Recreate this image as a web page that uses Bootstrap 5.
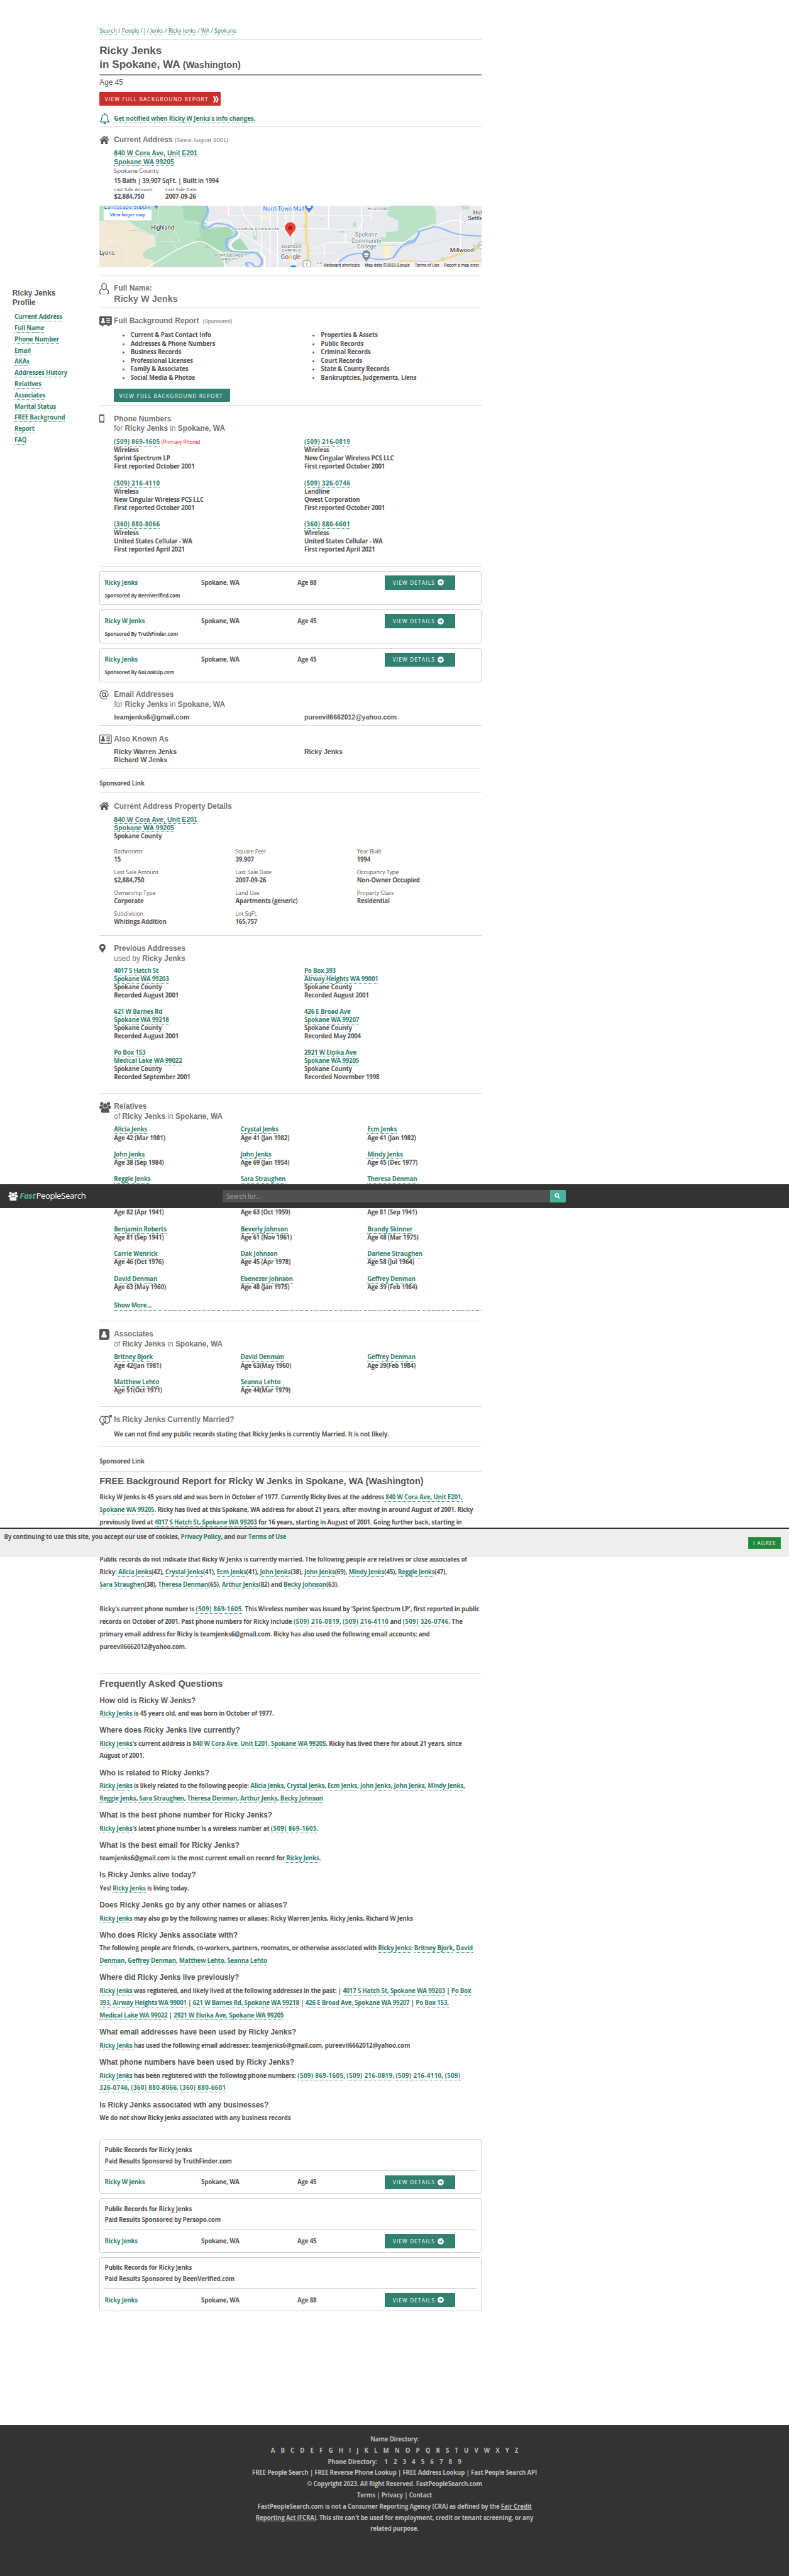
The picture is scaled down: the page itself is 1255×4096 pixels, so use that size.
<!DOCTYPE html>
<html lang="en">
<head>
<meta charset="utf-8">
<meta name="viewport" content="width=device-width, initial-scale=1">
<title>Ricky Jenks in Spokane, WA</title>
<link rel="stylesheet" href="https://cdn.jsdelivr.net/npm/bootstrap@5.3.0/dist/css/bootstrap.min.css">
<script src="https://cdn.jsdelivr.net/npm/bootstrap@5.3.0/dist/js/bootstrap.bundle.min.js"></script>
<style>
html{font-size:6.5935px}
body{font-family:"Open Sans","Noto Sans",sans-serif;font-size:1.47rem;font-weight:700;letter-spacing:-.028rem;color:#555;background:#fff;line-height:2rem}
.page{height:4096px;overflow:hidden}
.page a:not([href]){color:#328170;text-decoration:none;border-bottom:1px dotted #328170}
.page .cardx a:not([href]),.page .cookie a:not([href]){border:0}
.page a.ph:not([href]){letter-spacing:.06rem}
.arial,h1,h2,h3,h4{font-family:"Liberation Sans",Arial,sans-serif;font-weight:700;letter-spacing:0}
.side{width:24rem;padding:69.6rem 0 0 3rem;flex:none}
.side h2{font-size:1.8rem;line-height:2.3rem}
.side ul{padding:.9rem 0 0 .5rem}
.side li{line-height:2.7rem}
.main{width:92.25rem;flex:none}
.sec{border-bottom:1px solid #ddd;padding-top:2.05rem}
.sec h2{font-size:1.8rem;line-height:2.35rem;color:#757575;padding-left:3.5rem;position:relative}
.sec h2 span{font-weight:400}
.sec h2 svg,.bell svg{position:absolute;left:0}
.bd{padding-left:3.5rem}
.crumbs{height:9.6rem;padding-top:6.4rem;line-height:2.4rem;border-bottom:1px solid #ddd;font-weight:400;font-size:1.32rem;letter-spacing:0}
h1{font-size:2.6rem;line-height:3.4rem;height:8.6rem;padding-top:.8rem;border-bottom:2px solid #999}
h1,h2,h3,p,ul{margin:0!important}
h1 span{font-size:2.2rem}
.intro{height:12.4rem;padding-top:.6rem}
.age{font:1.8rem/2.4rem "Liberation Sans",Arial,sans-serif;letter-spacing:0}
.btnx{display:inline-flex;align-items:center;color:#fff;font-weight:400;font-size:1.27rem;letter-spacing:.175rem;border-radius:.2rem;line-height:2rem;white-space:nowrap}
.btn-red{background:#c72f2c;height:3.25rem;padding:.2rem .5rem 0 1.3rem;width:29.3rem;margin-top:1rem;justify-content:space-between}
.btn-green{background:#328170;height:3.25rem;padding:.2rem 0 0 1.3rem;width:28rem}
.btn-det{background:#328170;height:3.4rem;width:17rem;padding-left:2rem;letter-spacing:.17rem}
.bell{position:relative;padding-left:3.5rem;margin-top:1.9rem;line-height:2.6rem;letter-spacing:-.015rem}
.page .addr a:not([href]){font-family:"Liberation Sans",Arial,sans-serif;letter-spacing:0}
.addr a,.arial{font-size:1.6rem}
.addr{line-height:1.96rem}
.lt{font-weight:400;letter-spacing:0}
.tiny{font-size:1.15rem;display:block;line-height:1.75rem}
.facts{height:5.1rem}
.map{height:15rem;margin-top:-.45rem}
.cardx{border:1px solid #ccc;border-radius:.5rem;height:8.2rem;margin-bottom:1.1rem}
.crow{padding:1rem 0 0 1.1rem;height:4.3rem}
.spo{font-size:1.2rem;padding:.5rem 0 0 1.1rem}
.dc{width:1.5rem;height:1.5rem;margin-left:.6rem}
.pubcard{height:13.15rem;margin-bottom:1.05rem;padding:1.15rem 1.1rem 0}
.pt{line-height:2.7rem;height:6.35rem;border-bottom:1px solid #ccc}
.pb{height:5.5rem}
.w1{width:23.3rem}.w2{width:23.2rem}.w3{width:21rem}
.half{width:45.9rem}.rel{width:30.55rem}.third{width:29.3rem}
.cell{height:10rem}
.cell.c2{height:9.83rem;line-height:1.96rem}
.cell.c3{height:6rem}
.cell.cp{height:5rem;line-height:1.8rem}
.cell.cp small{font-size:1.33rem;font-weight:400;letter-spacing:0}
.para{line-height:3rem;white-space:nowrap}
.qa h3{font-size:1.8rem;line-height:2.4rem}
.qa p{line-height:3rem;padding:.4rem 0 1.43rem;white-space:nowrap}
.page .big{font-size:2.2rem;line-height:2.8rem;color:#555;padding:0}
.topbar{position:absolute;left:0;right:0;top:285.6rem;height:5.7rem;background:#333}
.srch{margin-left:32.9rem;width:79rem;height:3.1rem;background:#505050;color:#aaa;font-weight:400;font-size:1.55rem;line-height:3.2rem;padding-left:1rem}
.logo{margin-left:.4rem;color:#fff;font-weight:400;font-size:2rem;line-height:3rem;width:16rem;white-space:nowrap;letter-spacing:-.06rem}
.logo b{color:#47b39c;font-style:italic;font-weight:700;margin-right:.2rem}
.sbtn{background:#47b39c;width:3.8rem;height:3.1rem;border-radius:0 .3rem .3rem 0}
.cookie{position:absolute;left:0;right:0;top:368.4rem;height:7.1rem;background:#eee;border-top:2px solid #333}
.agree{background:#21893a;border:1px solid #28a745;color:#fff;width:7.9rem;height:2.95rem;font-weight:400;font-size:1.25rem;letter-spacing:.15rem;margin:1.9rem 1.9rem 0 0}
.foot{position:absolute;left:0;right:0;top:584.8rem;height:37rem;background:#333;color:#bbb;padding-top:2.15rem;line-height:2.7rem}
.dir{word-spacing:1.05rem}
.hid{height:2rem;padding-top:1rem}
.peek{display:block;height:1rem;border-bottom:1px dotted #328170}
.bul{padding-left:4rem;line-height:2.04rem}
</style>
</head>
<body>
<svg width="0" height="0" class="position-absolute"><symbol id="arr" viewBox="0 0 16 16"><circle cx="8" cy="8" r="8" fill="#fff"/><path d="M4 7h4V4l5 4-5 4V9H4z" fill="#328170"/></symbol></svg>
<div class="page position-relative">
<div class="d-flex">
<aside class="side">
<h2>Ricky Jenks<br>Profile</h2>
<ul class="list-unstyled">
<li><a>Current Address</a></li><li><a>Full Name</a></li><li><a>Phone Number</a></li><li><a>Email</a></li><li><a>AKAs</a></li><li><a>Addresses History</a></li><li><a>Relatives</a></li><li><a>Associates</a></li><li><a>Marital Status</a></li><li><a>FREE Background</a></li><li><a>Report</a></li><li><a>FAQ</a></li>
</ul>
</aside>
<main class="main">
<nav class="crumbs"><a>Search</a> / <a>People</a> / <a>J</a> / <a>Jenks</a> / <a>Ricky Jenks</a> / <a>WA</a> / <a>Spokane</a></nav>
<h1>Ricky Jenks<br>in Spokane, WA <span>(Washington)</span></h1>
<div class="intro sec">
<div class="age">Age 45</div>
<div class="d-flex"><div class="btnx btn-red">VIEW FULL BACKGROUND REPORT <svg class="flex-shrink-0" style="width:1.6rem;height:1.5rem" viewBox="0 0 16 16"><path d="M1 0h3.500l4.500 8-4.500 8H1l4-8zM7.500 0H11l4.500 8-4.500 8H7.500l4-8z" fill="#fff"/></svg></div></div>
<div class="bell"><svg style="width:2.6rem;height:2.7rem" viewBox="0 0 26 27"><path d="M2 21c4-3 4-6 4-11 0-4 3-7 7-7s7 3 7 7c0 5 0 8 4 11zM13 0v3" fill="none" stroke="#328170" stroke-width="2" stroke-linejoin="round"/><path d="M9.500 22h7a3.500 4 0 0 1-7 0z" fill="#328170"/></svg><a>Get notified when Ricky W Jenks's info changes.</a></div>
</div>

<section class="sec" style="height:35.8rem">
<h2 style="height:2.35rem"><svg style="width:2.4rem;height:2rem;top:.1rem" viewBox="0 0 24 20"><path id="hs" d="M12 0l5 4V1h3v5.500l4 3.500-1.300 1.800L12 3 1.300 11.800 0 10zM12 4.800l8 6.600V20h-5.500v-6h-5v6H4v-8.600z" fill="#555"/></svg>Current Address <span style="font-size:1.44rem">(Since August 2001)</span></h2>
<div class="bd addr" style="padding-top:1rem;height:5.02rem"><a>840 W Cora Ave, Unit E201</a><br><a>Spokane WA 99205</a></div>
<div class="bd lt" style="line-height:2.45rem;font-size:1.42rem">Spokane County</div>
<div class="bd" style="line-height:2.4rem">15 Bath | 39,907 SqFt. | Built in 1994</div>
<div class="bd d-flex facts" style="line-height:1.75rem"><div style="width:12.4rem"><span class="lt tiny">Last Sale Amount</span>$2,884,750</div><div><span class="lt tiny">Last Sale Date</span>2007-09-26</div></div>
<svg class="map w-100 d-block" viewBox="0 0 922.500 150" preserveAspectRatio="none" font-family="Roboto" font-weight="400" letter-spacing="0">
<rect width="923" height="150" fill="#e8eaed"/>
<g transform="translate(0,-1) scale(.5885,.3333)" fill="none">
<path d="M0 0H440C470 60 420 130 450 160C500 150 560 170 575 200C540 230 520 270 530 330C570 360 600 330 650 330C670 380 650 410 600 456H0z" fill="#bbe2c6"/>
<path d="M0 110C60 120 100 100 125 120C150 160 190 200 227 214L232 300C190 310 170 350 182 380C200 400 240 380 215 456H0z" fill="#f1e9d6"/>
<path d="M340 0H430C470 60 400 130 430 170C500 190 530 110 545 200C550 230 510 270 530 330C500 340 480 300 430 310C460 250 350 280 420 220C400 170 420 110 400 110L350 105z" fill="#a8dab5"/>
<path d="M578 240L612 320 560 330C530 300 535 270 578 240z" fill="#a8dab5"/>
<path d="M500 456L540 400 640 340 665 380 660 456zM452 0H640V320L580 215 545 130 470 120z" fill="#e8eaed"/>
<path d="M1190 0H1365L1380 40V130L1310 170 1300 210 1270 265H1145L1150 230 1175 235 1174 195 1225 185V110L1180 75z" fill="#bbe2c6"/>
<path d="M1480 3h35v30h-25zM1530 285h15v45h-15zM900 97h15v10h-15zM980 186h28v12h-28zM792 275h40v14h-40zM836 145h12v24h-12zM1040 125h12v32h-12zM1400 375h15v30h-15zM632 170h14v80h-14z" fill="#bbe2c6"/>
<path d="M510 28h18v43h-18z" fill="#fce4e4"/><path d="M658 80h35v26h-35zM847 3h30v72h-30zM1165 275h30v135h-30z" fill="#fbf0d0"/>
<g stroke="#fff" stroke-width="4">
<path d="M530 3V75H1115M665 3V450M700 3V450M730 3V450M795 3V450M765 3V200M1075 3V200M1115 3V110M540 170H900L1060 178 1085 100M580 3C590 120 640 130 640 220M722 410H960M805 300V420M880 310L940 270H1010L1250 270M860 310H900M855 345H970M980 380L960 456M1008 200V270M940 3V170H870M922 270V380M1480 50V360M580 200L770 410"/>
<path d="M430 0C480 60 400 110 450 130C520 90 540 100 550 170C610 210 540 250 538 290C550 350 600 330 645 322C700 380 670 420 680 456M190 456L320 320C360 290 390 250 430 268L500 345 520 456M1565 125H1490C1460 90 1440 110 1380 150C1300 180 1300 220 1240 280C1210 330 1220 390 1190 390H1110" stroke-width="6"/>
<path d="M245 3L235 260M240 260H330L300 150M110 260V456M0 260H110M0 350L60 235M320 320L290 240M350 120L480 150M500 345L600 330M520 456L620 400 645 322" stroke-width="2.500" opacity=".7"/></g>
<path d="M435 3C470 60 400 120 430 170C480 150 450 110 530 145C590 200 560 230 520 245C520 300 520 335 560 335C600 345 640 330 655 365C690 430 640 480 625 420C590 400 600 440 620 456M970 456C980 400 1020 340 1080 350C1100 400 1180 400 1205 380C1220 350 1220 320 1250 280C1290 270 1310 230 1310 190L1375 155C1420 170 1430 200 1490 215L1568 225" stroke="#90b8fb" stroke-width="9"/>
<path d="M1245 310l15-50 45-15-15 30-30 10z" fill="#9cc0fc"/>
<path d="M120 185L160 180 200 210 235 200" stroke="#9cc0fc" stroke-width="2"/>
<path d="M960 360C1080 240 1200 320 1330 280C1450 220 1500 230 1568 240" stroke="#d4d7dc" stroke-width="3"/>
<path d="M848 3V280L856 300V456M1190 456L1240 405 1380 410 1568 300M1290 456L1568 400" stroke="#f5c34e" stroke-width="9"/>
<path d="M848 3V280L856 300V456M1190 456L1240 405 1380 410 1568 300M1290 456L1568 400" stroke="#fde9a9" stroke-width="4"/>
</g>
<g fill="#3c4043" stroke="#fff" stroke-width="2" paint-order="stroke">
<g fill="#1a73e8"><text x="11" y="8" textLength="112" font-size="14">Landscape Supply</text><text x="395" y="12" textLength="99" font-size="14">NorthTown Mall</text></g>
<g font-size="14" fill="#222"><text x="125" y="58" textLength="55">Highland</text><text x="0" y="118" textLength="37">Lyons</text><text x="846" y="113" textLength="57">Millwood</text><text x="902" y="21">Hut</text><text x="889" y="34.500">Settle</text></g>
<g font-size="9.500" fill="#5f6368"><text x="323" y="59" textLength="111">AUDUBON-DOWNRIVER</text><text x="440" y="102" textLength="47">EMERSON</text><text x="440" y="111" textLength="47">GARFIELD</text><text x="279" y="122.500" textLength="68">FORT GEORGE</text><text x="294" y="131.500" textLength="39">WRIGHT</text><text x="293" y="154" textLength="76">WEST SPOKANE</text><text x="526" y="140.500" textLength="34">LOGAN</text><text x="648" y="11" textLength="48">HILLYARD</text></g>
<g font-size="13.500" fill="#607d8b"><text x="617" y="75" textLength="54">Spokane</text><text x="608" y="89" textLength="72">Community</text><text x="622" y="103" textLength="46">College</text></g>
</g>
<path d="M460.500 77C459 66 448 62 448 53a12.700 13.300 0 0 1 25.500 0C473.500 62 462 66 460.500 77z" fill="#ea4335"/><circle cx="460.500" cy="53.500" r="5" fill="#b31412"/>
<path d="M496 0h20c0 8-7 10-10 18-2-8-10-10-10-18zM133 0h9l-4.500 9z" fill="#4285f4"/><path d="M502 0h8v6h-8z" fill="#fff"/>
<path d="M644 137c-2-8-10-11-10-19a10 10.500 0 0 1 20 0c0 8-8 11-10 19z" fill="#78909c"/><path d="M637 117l7-3.500 7 3.500-7 3.500zM640 120v3l4 1.500 4-1.500v-3l-4 2z" fill="#fff"/>
<circle cx="468" cy="152" r="8.500" fill="#12a4b8"/>
<rect x="491.500" y="133" width="18" height="15" rx="4" fill="#fff" stroke="#666"/><text x="497.500" y="144" font-size="9" fill="#333">2</text>
<circle cx="921" cy="96" r="8" fill="#fff" stroke="#666"/><text x="915" y="99" font-size="8" fill="#333">29</text>
<text y="129" font-size="15.500" font-weight="500" stroke="#fff" stroke-width="2" paint-order="stroke"><tspan x="437" fill="#4285f4">G</tspan><tspan x="448" fill="#ea4335">o</tspan><tspan x="457" fill="#fbbc05">o</tspan><tspan x="466" fill="#4285f4">g</tspan><tspan x="474" fill="#34a853">l</tspan><tspan x="477" fill="#ea4335">e</tspan></text>
<rect x="538" y="136" width="385" height="14" fill="#f5f5f5" opacity=".8"/>
<g font-size="10" fill="#111"><text x="541" y="147" textLength="87">Keyboard shortcuts</text><text x="640" y="147" textLength="109">Map data ©2023 Google</text><text x="761" y="147" textLength="59">Terms of Use</text><text x="832" y="147" textLength="84">Report a map error</text></g>
<rect x="10" y="10" width="116" height="27" rx="2" fill="#000" opacity=".15"/><rect x="10" y="10" width="116" height="26" rx="2" fill="#fff"/><text x="25" y="26.500" font-size="12" fill="#1a73e8" font-weight="500" textLength="86">View larger map</text>
</svg>
</section>

<section class="sec" style="height:7.85rem">
<h2><svg style="width:2.3rem;height:2.8rem;top:-.2rem" viewBox="0 0 23 28"><path d="M6 7a5.500 6 0 0 1 11 0v3a5.500 6 0 0 1-11 0zM7 14C2 15 1 19 1 23c0 2 1 4 4 4h13c3 0 4-2 4-4 0-4-1-8-6-9" fill="none" stroke="#555" stroke-width="2"/></svg>Full Name:</h2>
<h2 style="font-size:2.2rem;line-height:2.5rem">Ricky W Jenks</h2>
</section>

<section class="sec" style="height:23.6rem;padding-top:2rem">
<h2><svg style="width:3rem;height:2.3rem;top:.1rem" viewBox="0 0 30 23"><rect width="30" height="21" rx="2" fill="#555"/><path d="M4 16c0-4 1-5 3-5.500C5 7 6 4 9 4s4 3 2 6.500c2 .5 3 1.500 3 5.500zM17 5h9v2h-9zM17 9.500h9v2h-9zM17 14h9v2h-9z" fill="#fff"/><path d="M5 21h5v2H5zM20 21h5v2h-5z" fill="#555"/></svg>Full Background Report <span style="font-size:1.3rem;margin-left:.4rem">(Sponsored)</span></h2>
<div class="row g-0 bd" style="padding-top:1.1rem"><div class="half"><ul class="bul"><li>Current &amp; Past Contact Info</li><li>Addresses &amp; Phone Numbers</li><li>Business Records</li><li>Professional Licenses</li><li>Family &amp; Associates</li><li>Social Media &amp; Photos</li></ul></div><div class="col"><ul class="bul"><li>Properties &amp; Assets</li><li>Public Records</li><li>Criminal Records</li><li>Court Records</li><li>State &amp; County Records</li><li>Bankruptcies, Judgements, Liens</li></ul></div></div>
<div class="bd d-flex" style="padding-top:1.6rem"><div class="btnx btn-green">VIEW FULL BACKGROUND REPORT</div></div>
</section>

<section class="sec" style="height:38.75rem">
<h2><svg style="width:1.2rem;height:2rem;top:.1rem" viewBox="0 0 12 20"><path d="M2 0h8q2 0 2 2v16q0 2-2 2H2q-2 0-2-2V2q0-2 2-2zM1.800 3.500v12h8.400v-12z" fill="#555" fill-rule="evenodd"/><circle cx="6" cy="17.700" r="1" fill="#fff"/></svg>Phone Numbers<br><span>for</span> Ricky Jenks <span>in</span> Spokane, WA</h2>
<div class="row g-0 bd" style="padding-top:.9rem"><div class="half">
<div class="cell"><a class="ph">(509) 869-1605</a> <span class="lt" style="color:red;font-size:1.25rem">(Primary Phone)</span><br>Wireless<br>Sprint Spectrum LP<br>First reported October 2001</div>
<div class="cell"><a class="ph">(509) 216-4110</a><br>Wireless<br>New Cingular Wireless PCS LLC<br>First reported October 2001</div>
<div class="cell"><a class="ph">(360) 880-8066</a><br>Wireless<br>United States Cellular - WA<br>First reported April 2021</div></div>
<div class="col">
<div class="cell"><a class="ph">(509) 216-0819</a><br>Wireless<br>New Cingular Wireless PCS LLC<br>First reported October 2001</div>
<div class="cell"><a class="ph">(509) 326-0746</a><br>Landline<br>Qwest Corporation<br>First reported October 2001</div>
<div class="cell"><a class="ph">(360) 880-6601</a><br>Wireless<br>United States Cellular - WA<br>First reported April 2021</div></div></div>
</section>

<div style="padding-top:1.1rem;height:27.9rem">
<div class="cardx"><div class="d-flex align-items-center crow"><div class="w1"><a>Ricky Jenks</a></div><div class="w2">Spokane, WA</div><div class="w3">Age 88</div><div class="btnx btn-det">VIEW DETAILS <svg class="dc"><use href="#arr"/></svg></div></div><div class="spo">Sponsored By BeenVerified.com</div></div>
<div class="cardx"><div class="d-flex align-items-center crow"><div class="w1"><a>Ricky W Jenks</a></div><div class="w2">Spokane, WA</div><div class="w3">Age 45</div><div class="btnx btn-det">VIEW DETAILS <svg class="dc"><use href="#arr"/></svg></div></div><div class="spo">Sponsored By TruthFinder.com</div></div>
<div class="cardx"><div class="d-flex align-items-center crow"><div class="w1"><a>Ricky Jenks</a></div><div class="w2">Spokane, WA</div><div class="w3">Age 45</div><div class="btnx btn-det">VIEW DETAILS <svg class="dc"><use href="#arr"/></svg></div></div><div class="spo">Sponsored By GoLookUp.com</div></div>
</div>

<section class="sec" style="height:10.6rem;padding-top:1.95rem">
<h2><svg style="width:2.3rem;height:2.3rem" viewBox="0 0 23 23"><ellipse cx="10.800" cy="11.500" rx="4" ry="4.800" fill="none" stroke="#555" stroke-width="2"/><path d="M16 6.500l-1.200 7.500c0 3 6.500 3 6.500-3C21.300 5 17 1.200 11.500 1.200S1.200 6 1.200 12s4.500 10 10.300 10c3 0 5-1 6.500-2" fill="none" stroke="#555" stroke-width="1.800"/></svg>Email Addresses<br><span>for</span> Ricky Jenks <span>in</span> Spokane, WA</h2>
<div class="bd d-flex arial" style="padding-top:.9rem"><div class="half">teamjenks6@gmail.com</div><div>pureevil6662012@yahoo.com</div></div>
</section>
<section class="sec" style="height:10.35rem">
<h2><svg style="width:3rem;height:2.3rem" viewBox="0 0 30 23"><rect x="1" y="1" width="28" height="20.500" rx="2" fill="none" stroke="#555" stroke-width="1.800"/><path d="M4 16c0-4 1-5 3-5.500C5 7 6 4 9 4s4 3 2 6.500c2 .5 3 1.500 3 5.500zM17 5h9v1.800h-9zM17 9.500h9v1.800h-9zM17 14h9v1.800h-9zM6 19h3v3H6zM21 19h3v3h-3z" fill="#555"/></svg>Also Known As</h2>
<div class="bd d-flex arial" style="padding-top:.85rem"><div class="half">Ricky Warren Jenks<br>Richard W Jenks</div><div>Ricky Jenks</div></div>
</section>
<section class="sec" style="height:5.8rem;padding-top:2.5rem">Sponsored Link</section>

<section class="sec" style="height:34.4rem;padding-top:2.15rem">
<h2><svg style="width:2.4rem;height:2rem" viewBox="0 0 24 20"><use href="#hs"/></svg>Current Address Property Details</h2>
<div class="bd addr" style="padding-top:.9rem;height:4.82rem"><a>840 W Cora Ave, Unit E201</a><br><a>Spokane WA 99205</a></div>
<div class="bd" style="line-height:2.3rem">Spokane County</div>
<div class="row g-0 bd" style="padding-top:1.6rem">
<div class="third"><div class="cell cp"><small>Bathrooms</small><br>15</div><div class="cell cp"><small>Last Sale Amount</small><br>$2,884,750</div><div class="cell cp"><small>Ownership Type</small><br>Corporate</div><div class="cell cp"><small>Subdivision</small><br>Whitings Addition</div></div>
<div class="third"><div class="cell cp"><small>Square Feet</small><br>39,907</div><div class="cell cp"><small>Last Sale Date</small><br>2007-09-26</div><div class="cell cp"><small>Land Use</small><br>Apartments (generic)</div><div class="cell cp"><small>Lot SqFt.</small><br>165,757</div></div>
<div class="col"><div class="cell cp"><small>Year Built</small><br>1994</div><div class="cell cp"><small>Occupancy Type</small><br>Non-Owner Occupied</div><div class="cell cp"><small>Property Class</small><br>Residential</div></div>
</div>
</section>

<section class="sec" style="height:38.1rem">
<h2><svg style="width:1.5rem;height:2.3rem" viewBox="0 0 15 23"><path d="M7.500 23C6 16 0 14 0 7.500a7.500 7.500 0 0 1 15 0C15 14 9 16 7.500 23zM7.500 4a3 3.500 0 1 0 .01 0z" fill="#555" fill-rule="evenodd"/></svg>Previous Addresses<br><span>used by</span> Ricky Jenks</h2>
<div class="row g-0 bd" style="padding-top:.9rem"><div class="half">
<div class="cell c2"><a>4017 S Hatch St</a><br><a>Spokane WA 99203</a><br>Spokane County<br>Recorded August 2001</div>
<div class="cell c2"><a>621 W Barnes Rd</a><br><a>Spokane WA 99218</a><br>Spokane County<br>Recorded August 2001</div>
<div class="cell c2"><a>Po Box 153</a><br><a>Medical Lake WA 99022</a><br>Spokane County<br>Recorded September 2001</div></div>
<div class="col">
<div class="cell c2"><a>Po Box 393</a><br><a>Airway Heights WA 99001</a><br>Spokane County<br>Recorded August 2001</div>
<div class="cell c2"><a>426 E Broad Ave</a><br><a>Spokane WA 99207</a><br>Spokane County<br>Recorded May 2004</div>
<div class="cell c2"><a>2921 W Eloika Ave</a><br><a>Spokane WA 99205</a><br>Spokane County<br>Recorded November 1998</div></div></div>
</section>

<section class="sec" style="height:54.85rem">
<h2><svg style="width:2.8rem;height:2.7rem;top:-.1rem" viewBox="0 0 28 27"><g fill="#555"><g id="ppl"><circle cx="6" cy="4.500" r="4"/><circle cx="22" cy="4.500" r="4"/><path d="M0 15c0-5 2-6 5-6h18c3 0 5 1 5 6l-3 2H3z"/></g></g><g stroke="#fff"><ellipse cx="14" cy="9" rx="5.500" ry="6" fill="#555"/><path d="M3.500 24c0-7 2-9 6-10q4.500 3 9 0c4 1 6 3 6 10 0 3-3 3-10.500 3s-10.500 0-10.500-3z" fill="#555"/></g></svg>Relatives<br><span>of</span> Ricky Jenks <span>in</span> Spokane, WA</h2>
<div class="row g-0 bd" style="padding-top:.9rem">
<div class="rel"><div class="cell c3"><a>Alicia Jenks</a><br>Age 42 (Mar 1981)</div><div class="cell c3"><a>John Jenks</a><br>Age 38 (Sep 1984)</div><div class="cell c3"><a>Reggie Jenks</a></div><div class="cell c3"><div class="hid"><i class="peek" style="width:9.1rem"></i></div>Age 82 (Apr 1941)</div><div class="cell c3"><a>Benjamin Roberts</a><br>Age 81 (Sep 1941)</div><div class="cell c3"><a>Carrie Wenrick</a><br>Age 46 (Oct 1976)</div><div class="cell c3"><a>David Denman</a><br>Age 63 (May 1960)</div></div>
<div class="rel"><div class="cell c3"><a>Crystal Jenks</a><br>Age 41 (Jan 1982)</div><div class="cell c3"><a>John Jenks</a><br>Age 69 (Jan 1954)</div><div class="cell c3"><a>Sara Straughen</a></div><div class="cell c3"><div class="hid"><i class="peek" style="width:10.4rem"></i></div>Age 63 (Oct 1959)</div><div class="cell c3"><a>Beverly Johnson</a><br>Age 61 (Nov 1961)</div><div class="cell c3"><a>Dak Johnson</a><br>Age 45 (Apr 1978)</div><div class="cell c3"><a>Ebenezer Johnson</a><br>Age 48 (Jan 1975)</div></div>
<div class="col"><div class="cell c3"><a>Ecm Jenks</a><br>Age 41 (Jan 1982)</div><div class="cell c3"><a>Mindy Jenks</a><br>Age 45 (Dec 1977)</div><div class="cell c3"><a>Theresa Denman</a></div><div class="cell c3"><div class="hid"><i class="peek" style="width:8.8rem"></i></div>Age 81 (Sep 1941)</div><div class="cell c3"><a>Brandy Skinner</a><br>Age 48 (Mar 1975)</div><div class="cell c3"><a>Darlene Straughen</a><br>Age 58 (Jul 1964)</div><div class="cell c3"><a>Geffrey Denman</a><br>Age 39 (Feb 1984)</div></div>
</div>
<div class="bd" style="padding-top:.4rem"><a class="d-block" style="height:2.3rem">Show More...</a></div>
</section>

<section class="sec" style="height:20.65rem">
<h2><svg style="width:2.5rem;height:2.7rem;top:-.2rem" viewBox="0 0 25 27"><rect width="23" height="27" rx="3" fill="#555"/><path d="M22 6h3v4h-3zM22 12h3v4h-3zM22 18h3v3h-3z" fill="#555"/><path d="M5 20c0-5 1-6.500 4-7.500C7 8 8 6 11.500 6s4.500 2 2.500 6.500c3 1 4 2.500 4 7.500q-6.500 2-13 0z" fill="#fff"/></svg>Associates<br><span>of</span> Ricky Jenks <span>in</span> Spokane, WA</h2>
<div class="row g-0 bd" style="padding-top:.95rem">
<div class="rel"><div class="cell c3"><a>Britney Bjork</a><br>Age 42(Jan 1981)</div><div class="cell c3"><a>Matthew Lehto</a><br>Age 51(Oct 1971)</div></div>
<div class="rel"><div class="cell c3"><a>David Denman</a><br>Age 63(May 1960)</div><div class="cell c3"><a>Seanna Lehto</a><br>Age 44(Mar 1979)</div></div>
<div class="col"><div class="cell c3"><a>Geffrey Denman</a><br>Age 39(Feb 1984)</div></div></div>
</section>
<section class="sec" style="height:9.75rem">
<h2><svg style="width:3rem;height:2.6rem" viewBox="0 0 30 26"><g fill="none" stroke="#555" stroke-width="2"><ellipse cx="8.500" cy="11.500" rx="7.500" ry="8.500"/><ellipse cx="18" cy="11.500" rx="7.500" ry="8.500"/><path d="M8.500 20v6M5 23h7M23 6.500L29 1M24 1h5v5"/></g></svg>Is Ricky Jenks Currently Married?</h2>
<div class="bd" style="padding-top:1.15rem;line-height:2.4rem">We can not find any public records stating that Ricky Jenks is currently Married. It is not likely.</div>
</section>
<section class="sec" style="height:5.85rem;padding-top:2.5rem">Sponsored Link</section>

<section class="sec" style="height:48.75rem;padding-top:1rem">
<h2 class="big">FREE Background Report for Ricky W Jenks in Spokane, WA (Washington)</h2>
<p class="para" style="padding-top:1rem;height:16rem">Ricky W Jenks is 45 years old and was born in October of 1977. Currently Ricky lives at the address <a>840 W Cora Ave, Unit E201,</a><br><a>Spokane WA 99205</a>. Ricky has lived at this Spokane, WA address for about 21 years, after moving in around August of 2001. Ricky<br>previously lived at <a>4017 S Hatch St, Spokane WA 99203</a> for 16 years, starting in August of 2001. Going further back, starting in</p>
<p class="para" style="height:12rem">Public records do not indicate that Ricky W Jenks is currently married. The following people are relatives or close associates of<br>Ricky: <a>Alicia Jenks</a>(42), <a>Crystal Jenks</a>(41), <a>Ecm Jenks</a>(41), <a>John Jenks</a>(38), <a>John Jenks</a>(69), <a>Mindy Jenks</a>(45), <a>Reggie Jenks</a>(47),<br><a>Sara Straughen</a>(38), <a>Theresa Denman</a>(65), <a>Arthur Jenks</a>(82) and <a>Becky Johnson</a>(63).</p>
<p class="para">Ricky's current phone number is <a class="ph">(509) 869-1605</a>. This Wireless number was issued by 'Sprint Spectrum LP', first reported in public<br>records on October of 2001. Past phone numbers for Ricky include <a class="ph">(509) 216-0819</a>, <a class="ph">(509) 216-4110</a> and <a class="ph">(509) 326-0746</a>. The<br>primary email address for Ricky is teamjenks6@gmail.com. Ricky has also used the following email accounts: and<br>pureevil6662012@yahoo.com.</p>
</section>

<section class="qa" style="padding-top:1rem;height:112.3rem">
<h2 class="big">Frequently Asked Questions</h2>
<div style="padding-top:1.6rem">
<h3>How old is Ricky W Jenks?</h3><p><a>Ricky Jenks</a> is 45 years old, and was born in October of 1977.</p>
<h3>Where does Ricky Jenks live currently?</h3><p><a>Ricky Jenks</a>'s current address is <a>840 W Cora Ave, Unit E201, Spokane WA 99205</a>. Ricky has lived there for about 21 years, since<br>August of 2001.</p>
<h3>Who is related to Ricky Jenks?</h3><p><a>Ricky Jenks</a> is likely related to the following people: <a>Alicia Jenks</a>, <a>Crystal Jenks</a>, <a>Ecm Jenks</a>, <a>John Jenks</a>, <a>John Jenks</a>, <a>Mindy Jenks</a>,<br><a>Reggie Jenks</a>, <a>Sara Straughen</a>, <a>Theresa Denman</a>, <a>Arthur Jenks</a>, <a>Becky Johnson</a></p>
<h3>What is the best phone number for Ricky Jenks?</h3><p><a>Ricky Jenks</a>'s latest phone number is a wireless number at <a class="ph">(509) 869-1605</a>.</p>
<h3>What is the best email for Ricky Jenks?</h3><p>teamjenks6@gmail.com is the most current email on record for <a>Ricky Jenks</a>.</p>
<h3>Is Ricky Jenks alive today?</h3><p>Yes! <a>Ricky Jenks</a> is living today.</p>
<h3>Does Ricky Jenks go by any other names or aliases?</h3><p><a>Ricky Jenks</a> may also go by the following names or aliases: Ricky Warren Jenks, Ricky Jenks, Richard W Jenks</p>
<h3>Who does Ricky Jenks associate with?</h3><p>The following people are friends, co-workers, partners, roomates, or otherwise associated with <a>Ricky Jenks</a>: <a>Britney Bjork</a>, <a>David<br>Denman</a>, <a>Geffrey Denman</a>, <a>Matthew Lehto</a>, <a>Seanna Lehto</a></p>
<h3>Where did Ricky Jenks live previously?</h3><p><a>Ricky Jenks</a> was registered, and likely lived at the following addresses in the past: | <a>4017 S Hatch St, Spokane WA 99203</a> | <a>Po Box<br>393, Airway Heights WA 99001</a> | <a>621 W Barnes Rd, Spokane WA 99218</a> | <a>426 E Broad Ave, Spokane WA 99207</a> | <a>Po Box 153,<br>Medical Lake WA 99022</a> | <a>2921 W Eloika Ave, Spokane WA 99205</a></p>
<h3>What email addresses have been used by Ricky Jenks?</h3><p><a>Ricky Jenks</a> has used the following email addresses: teamjenks6@gmail.com, pureevil6662012@yahoo.com</p>
<h3>What phone numbers have been used by Ricky Jenks?</h3><p><a>Ricky Jenks</a> has been registered with the following phone numbers: <a class="ph">(509) 869-1605</a>, <a class="ph">(509) 216-0819</a>, <a class="ph">(509) 216-4110</a>, <a class="ph">(509)<br>326-0746</a>, <a class="ph">(360) 880-8066</a>, <a class="ph">(360) 880-6601</a></p>
<h3>Is Ricky Jenks associated wth any businesses?</h3><p>We do not show Ricky Jenks associated with any business records</p>
</div>
</section>

<div class="cardx pubcard"><div class="pt">Public Records for Ricky Jenks<br>Paid Results Sponsored by TruthFinder.com</div><div class="d-flex align-items-center pb"><div class="w1"><a>Ricky W Jenks</a></div><div class="w2">Spokane, WA</div><div class="w3">Age 45</div><div class="btnx btn-det">VIEW DETAILS <svg class="dc"><use href="#arr"/></svg></div></div></div>
<div class="cardx pubcard"><div class="pt">Public Records for Ricky Jenks<br>Paid Results Sponsored by Persopo.com</div><div class="d-flex align-items-center pb"><div class="w1"><a>Ricky Jenks</a></div><div class="w2">Spokane, WA</div><div class="w3">Age 45</div><div class="btnx btn-det">VIEW DETAILS <svg class="dc"><use href="#arr"/></svg></div></div></div>
<div class="cardx pubcard"><div class="pt">Public Records for Ricky Jenks<br>Paid Results Sponsored by BeenVerified.com</div><div class="d-flex align-items-center pb"><div class="w1"><a>Ricky Jenks</a></div><div class="w2">Spokane, WA</div><div class="w3">Age 88</div><div class="btnx btn-det">VIEW DETAILS <svg class="dc"><use href="#arr"/></svg></div></div></div>
</main>
</div>

<header class="topbar d-flex align-items-center">
<svg style="width:2.4rem;height:2.2rem;margin-left:1.95rem" viewBox="0 0 28 27" fill="#fff"><use href="#ppl"/><g stroke="#333"><ellipse cx="14" cy="9" rx="5.500" ry="6"/><path d="M3.500 24c0-7 2-9 6-10q4.500 3 9 0c4 1 6 3 6 10 0 3-3 3-10.500 3s-10.500 0-10.500-3z"/></g></svg>
<div class="logo"><b>Fast</b>PeopleSearch</div>
<div class="srch">Search for...</div>
<div class="sbtn d-flex align-items-center justify-content-center"><svg style="width:1.4rem;height:1.4rem" viewBox="0 0 14 14"><circle cx="5.800" cy="5.500" r="4" fill="none" stroke="#fff" stroke-width="2.200"/><path d="M8.500 8.500l4 4.500" stroke="#fff" stroke-width="2.600"/></svg></div>
</header>
<div class="cookie d-flex justify-content-between"><div style="padding:.9rem 0 0 1rem">By continuing to use this site, you accept our use of cookies, <a>Privacy Policy</a>, and our <a>Terms of Use</a></div><div class="agree d-flex align-items-center justify-content-center">I AGREE</div></div>
<footer class="foot text-center">
<div>Name Directory:</div><div class="dir">A B C D E F G H I J K L M N O P Q R S T U V W X Y Z</div><div>Phone Directory: <span class="dir">&nbsp;1 2 3 4 5 6 7 8 9</span></div>
<div>FREE People Search | FREE Reverse Phone Lookup | FREE Address Lookup | Fast People Search API</div><div>© Copyright 2023. All Right Reserved. FastPeopleSearch.com</div><div>Terms | Privacy | Contact</div>
<div>FastPeopleSearch.com is not a Consumer Reporting Agency (CRA) as defined by the <u>Fair Credit</u><br><u>Reporting Act (FCRA)</u>. This site can't be used for employment, credit or tenant screening, or any<br>related purpose.</div>
</footer>
</div>
</body>
</html>
